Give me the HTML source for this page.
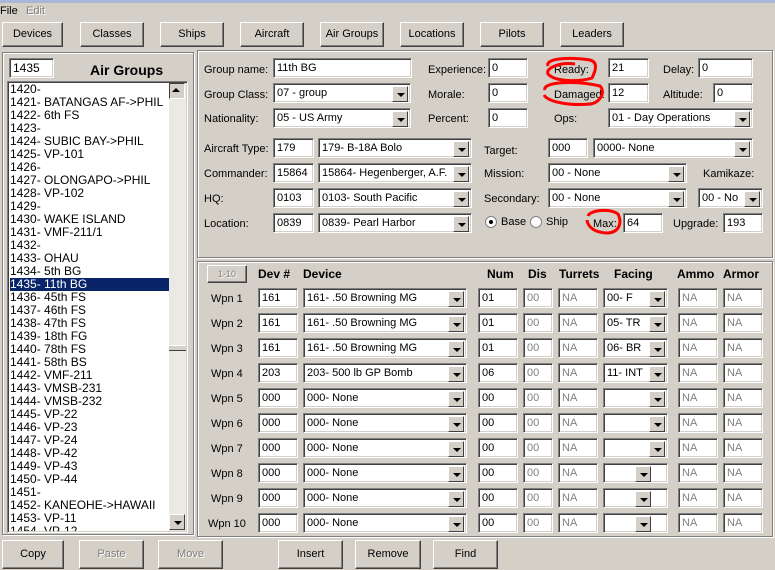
<!DOCTYPE html>
<html><head><meta charset="utf-8"><style>
*{box-sizing:border-box}
body{margin:0;width:775px;height:570px;background:#d4d0c8;font-family:"Liberation Sans",Arial,sans-serif;font-size:11px;color:#000;position:relative;overflow:hidden}
div,span{position:absolute}
.l{white-space:nowrap;line-height:14px}
.b{background:#d4d0c8;border-top:1px solid #fff;border-left:1px solid #fff;border-right:1px solid #404040;border-bottom:1px solid #404040;box-shadow:inset -1px -1px #808080;text-align:center;line-height:23px}
.g{color:#808080;text-shadow:1px 1px #fff}
.f{background:#fff;border-top:1px solid #808080;border-left:1px solid #808080;border-right:1px solid #fff;border-bottom:1px solid #fff;box-shadow:inset 1px 1px #404040,inset -1px -1px #d4d0c8;padding:2px 0 0 3px;line-height:14px;white-space:nowrap;overflow:hidden;height:20px}
.d{color:#808080}
.a{right:2px;top:2px;width:16px;height:16px;background:#d4d0c8;border-top:1px solid #fff;border-left:1px solid #fff;border-right:1px solid #404040;border-bottom:1px solid #404040}
.a:after{content:"";position:absolute;left:4px;top:6px;border-left:4px solid transparent;border-right:4px solid transparent;border-top:4px solid #000}
.fr{border:1px solid #808080;box-shadow:1px 1px #fff,inset 1px 1px #fff}
.h{font-weight:bold;font-size:12px}
</style></head><body>
<div style="left:0;top:0;width:775px;height:3px;background:#a8b8d8"></div>
<span class="l" style="left:0;top:4px">File</span><span class="l g" style="left:26px;top:4px">Edit</span>

<div class="b" style="left:2px;top:22px;width:61px;height:25px">Devices</div>
<div class="b" style="left:80px;top:22px;width:64px;height:25px">Classes</div>
<div class="b" style="left:160px;top:22px;width:64px;height:25px">Ships</div>
<div class="b" style="left:240px;top:22px;width:64px;height:25px">Aircraft</div>
<div class="b" style="left:320px;top:22px;width:64px;height:25px">Air Groups</div>
<div class="b" style="left:400px;top:22px;width:64px;height:25px">Locations</div>
<div class="b" style="left:480px;top:22px;width:64px;height:25px">Pilots</div>
<div class="b" style="left:560px;top:22px;width:64px;height:25px">Leaders</div>

<div class="fr" style="left:2px;top:52px;width:192px;height:483px"></div>
<div class="fr" style="left:197px;top:50px;width:576px;height:208px"></div>
<div class="fr" style="left:197px;top:261px;width:576px;height:276px"></div>

<div class="f" style="left:9px;top:58px;width:45px;font-size:12px">1435</div>
<span class="l h" style="left:90px;top:63px;font-size:14px">Air Groups</span>

<div class="f" style="left:7px;top:81px;width:181px;height:452px;padding:0"></div>
<div style="left:9px;top:83px;width:160px;height:448px;overflow:hidden;line-height:13px;font-size:12px">
<div class="l" style="position:static;line-height:13px;padding-left:1px">1420-<br>1421- BATANGAS AF-&gt;PHIL<br>1422- 6th FS<br>1423-<br>1424- SUBIC BAY-&gt;PHIL<br>1425- VP-101<br>1426-<br>1427- OLONGAPO-&gt;PHIL<br>1428- VP-102<br>1429-<br>1430- WAKE ISLAND<br>1431- VMF-211/1<br>1432-<br>1433- OHAU<br>1434- 5th BG<br><span style="position:static;display:block;background:#0a246a;color:#fff;width:159px">1435- 11th BG</span>1436- 45th FS<br>1437- 46th FS<br>1438- 47th FS<br>1439- 18th FG<br>1440- 78th FS<br>1441- 58th BS<br>1442- VMF-211<br>1443- VMSB-231<br>1444- VMSB-232<br>1445- VP-22<br>1446- VP-23<br>1447- VP-24<br>1448- VP-42<br>1449- VP-43<br>1450- VP-44<br>1451-<br>1452- KANEOHE-&gt;HAWAII<br>1453- VP-11<br>1454- VP-12</div></div>
<div style="left:169px;top:83px;width:17px;height:448px;background:#ebe9e4"></div>
<div class="a" style="left:169px;top:83px;right:auto;transform:rotate(180deg)"></div>
<div class="a" style="left:169px;top:514px;right:auto"></div>
<div style="left:169px;top:345px;width:17px;height:6px;background:#d4d0c8;border-top:1px solid #fff;border-bottom:1px solid #404040"></div>

<span class="l" style="left:204px;top:63px">Group name:</span><div class="f" style="left:273px;top:58px;width:139px">11th BG</div>
<span class="l" style="left:204px;top:88px">Group Class:</span><div class="f" style="left:273px;top:83px;width:138px">07 - group<div class="a"></div></div>
<span class="l" style="left:204px;top:112px">Nationality:</span><div class="f" style="left:273px;top:108px;width:138px">05 - US Army<div class="a"></div></div>
<span class="l" style="left:428px;top:63px">Experience:</span><div class="f" style="left:488px;top:58px;width:40px">0</div>
<span class="l" style="left:428px;top:88px">Morale:</span><div class="f" style="left:488px;top:83px;width:40px">0</div>
<span class="l" style="left:428px;top:112px">Percent:</span><div class="f" style="left:488px;top:108px;width:40px">0</div>
<span class="l" style="left:554px;top:63px">Ready:</span><div class="f" style="left:608px;top:58px;width:41px">21</div>
<span class="l" style="left:554px;top:88px">Damaged:</span><div class="f" style="left:608px;top:83px;width:41px">12</div>
<span class="l" style="left:554px;top:112px">Ops:</span><div class="f" style="left:608px;top:108px;width:145px">01 - Day Operations<div class="a"></div></div>
<span class="l" style="left:663px;top:63px">Delay:</span><div class="f" style="left:698px;top:58px;width:55px">0</div>
<span class="l" style="left:663px;top:88px">Altitude:</span><div class="f" style="left:713px;top:83px;width:40px">0</div>

<span class="l" style="left:204px;top:142px">Aircraft Type:</span><div class="f" style="left:273px;top:138px;width:41px">179</div><div class="f" style="left:318px;top:138px;width:154px">179- B-18A Bolo<div class="a"></div></div>
<span class="l" style="left:204px;top:167px">Commander:</span><div class="f" style="left:273px;top:163px;width:41px">15864</div><div class="f" style="left:318px;top:163px;width:154px">15864- Hegenberger, A.F.<div class="a"></div></div>
<span class="l" style="left:204px;top:192px">HQ:</span><div class="f" style="left:273px;top:188px;width:41px">0103</div><div class="f" style="left:318px;top:188px;width:154px">0103- South Pacific<div class="a"></div></div>
<span class="l" style="left:204px;top:217px">Location:</span><div class="f" style="left:273px;top:213px;width:41px">0839</div><div class="f" style="left:318px;top:213px;width:154px">0839- Pearl Harbor<div class="a"></div></div>

<span class="l" style="left:484px;top:144px">Target:</span><div class="f" style="left:548px;top:138px;width:40px">000</div><div class="f" style="left:593px;top:138px;width:160px">0000- None<div class="a"></div></div>
<span class="l" style="left:484px;top:167px">Mission:</span><div class="f" style="left:548px;top:163px;width:139px">00 - None<div class="a"></div></div>
<span class="l" style="left:703px;top:167px">Kamikaze:</span>
<span class="l" style="left:484px;top:192px">Secondary:</span><div class="f" style="left:548px;top:188px;width:139px">00 - None<div class="a"></div></div>
<div class="f" style="left:698px;top:188px;width:65px">00 - No<div class="a"></div></div>
<div style="left:485px;top:216px;width:12px;height:12px;border-radius:50%;background:#fff;border:1px solid #808080"><div style="left:3px;top:3px;width:4px;height:4px;border-radius:50%;background:#000"></div></div>
<span class="l" style="left:501px;top:215px">Base</span>
<div style="left:530px;top:216px;width:12px;height:12px;border-radius:50%;background:#fff;border:1px solid #808080"></div>
<span class="l" style="left:546px;top:215px">Ship</span>
<span class="l" style="left:593px;top:217px">Max:</span><div class="f" style="left:623px;top:213px;width:40px">64</div>
<span class="l" style="left:673px;top:217px">Upgrade:</span><div class="f" style="left:723px;top:213px;width:40px">193</div>

<svg style="position:absolute;left:0;top:0" width="775" height="570">
<path d="M548 66 C545 58 570 57 590 60 C598 62 596 70 592 78 C580 82 555 82 548 74 C545 68 560 62 575 64" fill="none" stroke="#f00" stroke-width="3"/>
<path d="M545 90 C542 82 575 80 600 86 C606 92 600 103 590 104 C570 106 548 102 544 95" fill="none" stroke="#f00" stroke-width="3"/>
<path d="M588 216 C590 210 610 208 618 214 C622 222 620 232 608 233 C596 233 588 228 587 220" fill="none" stroke="#f00" stroke-width="3"/>
</svg>

<div class="b g" style="left:207px;top:265px;width:40px;height:18px;line-height:16px;font-size:9px">1-10</div>
<span class="l h" style="left:258px;top:267px">Dev #</span>
<span class="l h" style="left:303px;top:267px">Device</span>
<span class="l h" style="left:487px;top:267px">Num</span>
<span class="l h" style="left:528px;top:267px">Dis</span>
<span class="l h" style="left:559px;top:267px">Turrets</span>
<span class="l h" style="left:614px;top:267px">Facing</span>
<span class="l h" style="left:677px;top:267px">Ammo</span>
<span class="l h" style="left:723px;top:267px">Armor</span>

<div style="left:0;top:288px">
<span class="l" style="left:211px;top:4px">Wpn 1</span><div class="f" style="left:258px;top:0;width:40px">161</div><div class="f" style="left:303px;top:0;width:164px">161- .50 Browning MG<div class="a"></div></div><div class="f" style="left:478px;top:0;width:40px">01</div><div class="f d" style="left:523px;top:0;width:30px">00</div><div class="f d" style="left:558px;top:0;width:40px">NA</div><div class="f" style="left:603px;top:0;width:65px">00- F<div class="a"></div></div><div class="f d" style="left:678px;top:0;width:40px">NA</div><div class="f d" style="left:723px;top:0;width:40px">NA</div></div>
<div style="left:0;top:313px">
<span class="l" style="left:211px;top:4px">Wpn 2</span><div class="f" style="left:258px;top:0;width:40px">161</div><div class="f" style="left:303px;top:0;width:164px">161- .50 Browning MG<div class="a"></div></div><div class="f" style="left:478px;top:0;width:40px">01</div><div class="f d" style="left:523px;top:0;width:30px">00</div><div class="f d" style="left:558px;top:0;width:40px">NA</div><div class="f" style="left:603px;top:0;width:65px">05- TR<div class="a"></div></div><div class="f d" style="left:678px;top:0;width:40px">NA</div><div class="f d" style="left:723px;top:0;width:40px">NA</div></div>
<div style="left:0;top:338px">
<span class="l" style="left:211px;top:4px">Wpn 3</span><div class="f" style="left:258px;top:0;width:40px">161</div><div class="f" style="left:303px;top:0;width:164px">161- .50 Browning MG<div class="a"></div></div><div class="f" style="left:478px;top:0;width:40px">01</div><div class="f d" style="left:523px;top:0;width:30px">00</div><div class="f d" style="left:558px;top:0;width:40px">NA</div><div class="f" style="left:603px;top:0;width:65px">06- BR<div class="a"></div></div><div class="f d" style="left:678px;top:0;width:40px">NA</div><div class="f d" style="left:723px;top:0;width:40px">NA</div></div>
<div style="left:0;top:363px">
<span class="l" style="left:211px;top:4px">Wpn 4</span><div class="f" style="left:258px;top:0;width:40px">203</div><div class="f" style="left:303px;top:0;width:164px">203- 500 lb GP Bomb<div class="a"></div></div><div class="f" style="left:478px;top:0;width:40px">06</div><div class="f d" style="left:523px;top:0;width:30px">00</div><div class="f d" style="left:558px;top:0;width:40px">NA</div><div class="f" style="left:603px;top:0;width:65px">11- INT<div class="a"></div></div><div class="f d" style="left:678px;top:0;width:40px">NA</div><div class="f d" style="left:723px;top:0;width:40px">NA</div></div>
<div style="left:0;top:388px">
<span class="l" style="left:211px;top:4px">Wpn 5</span><div class="f" style="left:258px;top:0;width:40px">000</div><div class="f" style="left:303px;top:0;width:164px">000- None<div class="a"></div></div><div class="f" style="left:478px;top:0;width:40px">00</div><div class="f d" style="left:523px;top:0;width:30px">00</div><div class="f d" style="left:558px;top:0;width:40px">NA</div><div class="f" style="left:603px;top:0;width:65px"><div class="a"></div></div><div class="f d" style="left:678px;top:0;width:40px">NA</div><div class="f d" style="left:723px;top:0;width:40px">NA</div></div>
<div style="left:0;top:413px">
<span class="l" style="left:211px;top:4px">Wpn 6</span><div class="f" style="left:258px;top:0;width:40px">000</div><div class="f" style="left:303px;top:0;width:164px">000- None<div class="a"></div></div><div class="f" style="left:478px;top:0;width:40px">00</div><div class="f d" style="left:523px;top:0;width:30px">00</div><div class="f d" style="left:558px;top:0;width:40px">NA</div><div class="f" style="left:603px;top:0;width:65px"><div class="a"></div></div><div class="f d" style="left:678px;top:0;width:40px">NA</div><div class="f d" style="left:723px;top:0;width:40px">NA</div></div>
<div style="left:0;top:438px">
<span class="l" style="left:211px;top:4px">Wpn 7</span><div class="f" style="left:258px;top:0;width:40px">000</div><div class="f" style="left:303px;top:0;width:164px">000- None<div class="a"></div></div><div class="f" style="left:478px;top:0;width:40px">00</div><div class="f d" style="left:523px;top:0;width:30px">00</div><div class="f d" style="left:558px;top:0;width:40px">NA</div><div class="f" style="left:603px;top:0;width:65px"><div class="a"></div></div><div class="f d" style="left:678px;top:0;width:40px">NA</div><div class="f d" style="left:723px;top:0;width:40px">NA</div></div>
<div style="left:0;top:463px">
<span class="l" style="left:211px;top:4px">Wpn 8</span><div class="f" style="left:258px;top:0;width:40px">000</div><div class="f" style="left:303px;top:0;width:164px">000- None<div class="a"></div></div><div class="f" style="left:478px;top:0;width:40px">00</div><div class="f d" style="left:523px;top:0;width:30px">00</div><div class="f d" style="left:558px;top:0;width:40px">NA</div><div class="f" style="left:603px;top:0;width:65px"><div class="a" style="right:16px"></div></div><div class="f d" style="left:678px;top:0;width:40px">NA</div><div class="f d" style="left:723px;top:0;width:40px">NA</div></div>
<div style="left:0;top:488px">
<span class="l" style="left:211px;top:4px">Wpn 9</span><div class="f" style="left:258px;top:0;width:40px">000</div><div class="f" style="left:303px;top:0;width:164px">000- None<div class="a"></div></div><div class="f" style="left:478px;top:0;width:40px">00</div><div class="f d" style="left:523px;top:0;width:30px">00</div><div class="f d" style="left:558px;top:0;width:40px">NA</div><div class="f" style="left:603px;top:0;width:65px"><div class="a" style="right:16px"></div></div><div class="f d" style="left:678px;top:0;width:40px">NA</div><div class="f d" style="left:723px;top:0;width:40px">NA</div></div>
<div style="left:0;top:513px">
<span class="l" style="left:208px;top:4px">Wpn 10</span><div class="f" style="left:258px;top:0;width:40px">000</div><div class="f" style="left:303px;top:0;width:164px">000- None<div class="a"></div></div><div class="f" style="left:478px;top:0;width:40px">00</div><div class="f d" style="left:523px;top:0;width:30px">00</div><div class="f d" style="left:558px;top:0;width:40px">NA</div><div class="f" style="left:603px;top:0;width:65px"><div class="a" style="right:16px"></div></div><div class="f d" style="left:678px;top:0;width:40px">NA</div><div class="f d" style="left:723px;top:0;width:40px">NA</div></div>

<div class="b" style="left:2px;top:540px;width:62px;height:29px;line-height:27px">Copy</div>
<div class="b g" style="left:79px;top:540px;width:65px;height:29px;line-height:27px">Paste</div>
<div class="b g" style="left:158px;top:540px;width:65px;height:29px;line-height:27px">Move</div>
<div class="b" style="left:278px;top:540px;width:65px;height:29px;line-height:27px">Insert</div>
<div class="b" style="left:355px;top:540px;width:66px;height:29px;line-height:27px">Remove</div>
<div class="b" style="left:433px;top:540px;width:65px;height:29px;line-height:27px">Find</div>
</body></html>
